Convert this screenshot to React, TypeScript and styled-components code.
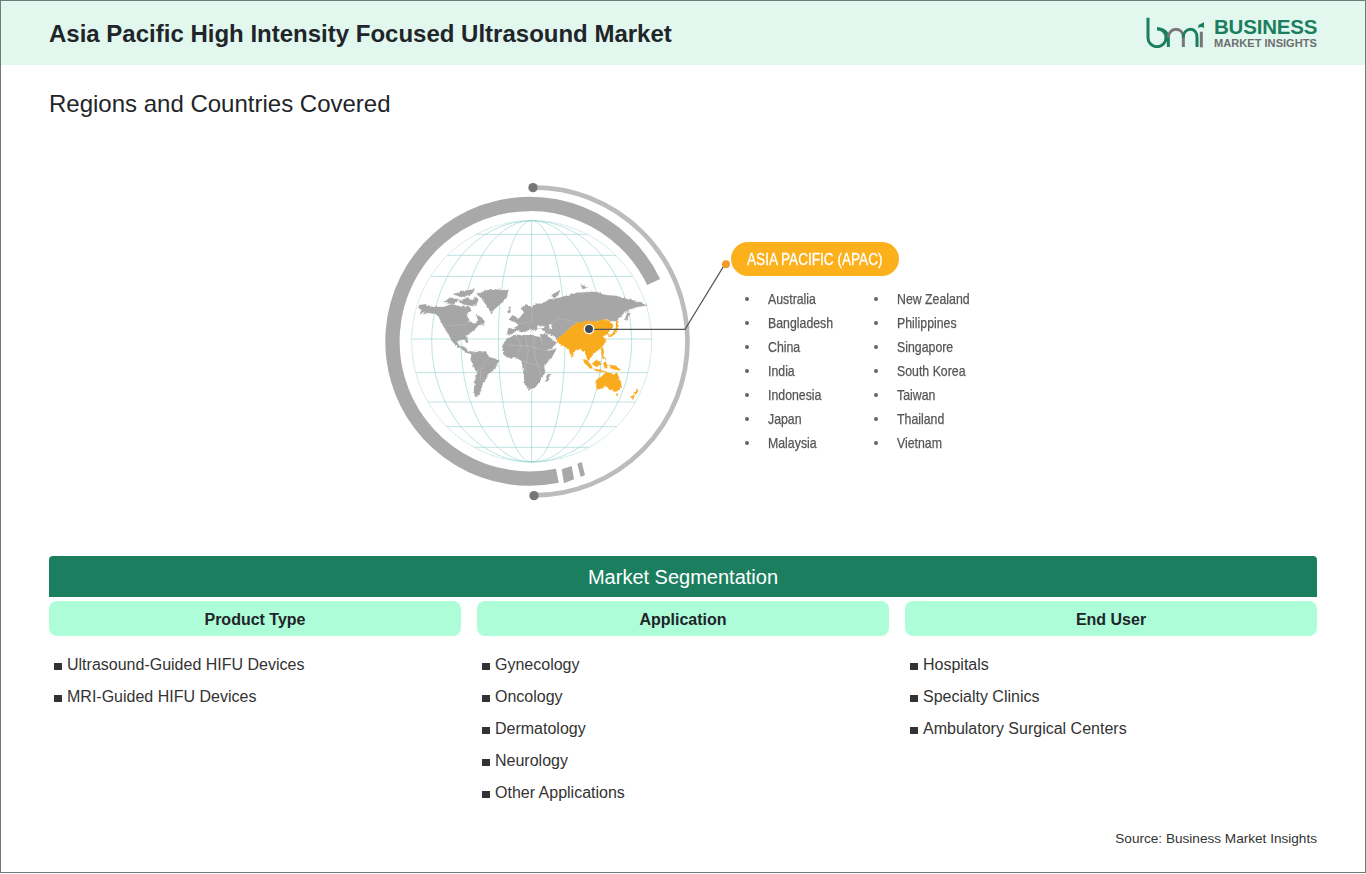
import React from "react";
import styled, { createGlobalStyle } from "styled-components";

const Global = createGlobalStyle`
  html, body { margin: 0; padding: 0; background: #fff; }
  body { font-family: "Liberation Sans", Arial, sans-serif; color: #212529; }
`;
const Frame = styled.div`
  box-sizing: border-box; width: 1366px; height: 873px; border: 1px solid #6e7b7b; border-bottom-color: #777;
  display: flex; flex-direction: column; overflow: hidden;
`;
const Header = styled.header`
  height: 64px; flex: none; background: #e2f8ef; display: flex; align-items: center; justify-content: space-between;
  padding: 0 48px;
`;
const Title = styled.h1`
  margin: 0; font-size: 24px; line-height: 29px; font-weight: 700; color: #212529;
`;
const Logo = styled.div`
  display: flex; align-items: center; gap: 9px; margin-top: -1px;
`;
const LogoWords = styled.div`
  display: flex; flex-direction: column; font-weight: 700; width: 103px;
`;
const LogoTop = styled.span`
  font-size: 20.5px; line-height: 20px; color: #1b7f5f; letter-spacing: -0.2px; white-space: nowrap;
`;
const LogoBottom = styled.span`
  font-size: 11.1px; line-height: 12px; color: #6f6f6f; white-space: nowrap;
`;
const Section = styled.section`
  padding: 0 48px; flex: none;
`;
const Heading = styled.h2`
  margin: 24px 0 0; font-size: 24px; line-height: 29px; font-weight: 400; color: #212529;
`;
const Figure = styled.div`
  display: flex; height: 440px; padding-left: 321px; margin-top: -2px; padding-top: 55px; box-sizing: border-box;
`;
const Globe = styled.svg`
  width: 365px; height: 340px; flex: none;
`;
const Legend = styled.div`
  margin: 71px 0 0 -4px; display: flex; flex-direction: column; align-items: flex-start;
`;
const Pill = styled.div`
  width: 168px; height: 34px; border-radius: 17px; background: #fbb01c; color: #fff; box-sizing: border-box; padding-left: 16px;
  font-size: 17px; line-height: 35px; white-space: nowrap; -webkit-text-stroke: 0.3px #fff;
`;
const Squeezed = styled.span<{ $x: number }>`
  display: inline-block; transform: scaleX(${(p) => p.$x}); transform-origin: left center;
`;
const Columns = styled.div`
  display: grid; grid-template-columns: 129px 129px; margin: 11px 0 0 14px;
`;
const Country = styled.div`
  height: 24px; display: flex; align-items: center; color: #555;
  font-size: 14.5px; font-weight: 400; white-space: nowrap;
  -webkit-text-stroke: 0.25px #555;
`;
const Dot = styled.span`
  width: 4px; height: 4px; border-radius: 50%; background: #666; margin-right: 19px; flex: none;
`;
const Banner = styled.div`
  height: 41px; background: #1b7f5f; color: #fff; border-radius: 4px 4px 0 0; text-align: center;
  font-size: 20px; line-height: 43px;
`;
const Segments = styled.div`
  display: grid; grid-template-columns: repeat(3, 412px); column-gap: 16px; margin-top: 4px;
`;
const SegmentHead = styled.div`
  height: 35px; border-radius: 8px; background: #adfdd9; text-align: center; font-size: 16px; font-weight: 700; line-height: 37px;
  color: #212529;
`;
const Items = styled.ul`
  list-style: none; margin: 13px 0 0; padding: 0 0 0 5px;
`;
const Item = styled.li`
  height: 32px; font-size: 16px; line-height: 32px; color: #333; white-space: nowrap;
  &::before {
    content: ""; display: inline-block; width: 8px; height: 7px; background: #333; margin-right: 5px; vertical-align: 0;
  }
`;
const SegmentBlock = styled.div``;
const Source = styled.div`
  position: absolute; right: 49px; top: 830px; font-size: 13.6px; line-height: 17px; color: #333;
`;

const left = ["Australia", "Bangladesh", "China", "India", "Indonesia", "Japan", "Malaysia"];
const right = ["New Zealand", "Philippines", "Singapore", "South Korea", "Taiwan", "Thailand", "Vietnam"];
const segs = [
  { t: "Product Type", i: ["Ultrasound-Guided HIFU Devices", "MRI-Guided HIFU Devices"] },
  { t: "Application", i: ["Gynecology", "Oncology", "Dermatology", "Neurology", "Other Applications"] },
  { t: "End User", i: ["Hospitals", "Specialty Clinics", "Ambulatory Surgical Centers"] },
];

// Coordinates below are in a map-local space; the group is translated by (90, 300).
const grayLand = [
  "55,103 75,100 100,108 130,108 155,100 185,108 205,105 215,118 200,130 205,150 222,158 235,148 228,130 245,140 255,150 250,160 235,163 225,175 208,188 198,195 205,212 200,215 190,205 175,208 170,212 180,225 195,228 205,240 225,243 215,250 200,245 180,230 160,215 145,190 130,165 115,135 100,128 85,125 70,130 75,120 60,130 65,115 55,110",
  "230,68 270,55 325,58 320,80 300,100 280,118 275,130 265,110 250,90 240,78",
  "130,95 150,80 175,85 165,100",
  "160,70 190,60 225,55 215,70 185,78",
  "175,90 200,82 225,90 218,105 190,100",
  "225,75 235,85 228,105 215,95",
  "325,108 332,108 330,114",
  "215,250 235,240 255,243 270,258 295,268 285,295 270,305 255,325 245,345 240,365 238,372 225,375 222,360 225,330 232,305 220,285 212,265",
  "307,225 320,205 345,192 375,188 400,195 420,198 430,225 445,240 470,232 455,260 432,285 435,305 420,330 405,350 385,355 375,340 370,300 365,270 345,258 325,262 310,250",
  "420,190 440,190 460,210 470,215 455,232 438,240 428,220",
  "320,190 325,175 345,170 355,160 340,150 345,135 355,145 372,125 362,112 378,100 395,108 405,98 425,98 450,85 480,80 505,72 535,65 585,62 615,72 650,75 680,84 710,90 742,102 712,108 688,115 668,130 650,150 640,150 620,145 595,150 560,152 530,155 510,170 490,190 470,205 455,190 440,188 420,170 405,180 390,175 370,185 350,178 335,190",
  "328,145 338,132 346,140 338,152",
  "322,118 330,114 332,124 324,126",
  "455,72 480,58 475,72 462,82",
  "542,40 560,50 550,54",
  "682,125 692,124 680,148 675,145",
  "436,328 444,306 450,310 442,332",
];
const orangeLand = [
  "470,205 490,190 510,170 530,155 560,150 590,152 610,145 630,150 640,165 630,175 625,188 610,195 618,205 610,225 600,235 590,240 580,250 570,262 565,272 555,245 540,235 525,238 515,260 508,240 495,225 478,218",
  "648,150 656,150 654,172 648,186 632,198 624,196 640,182 648,170",
  "548,264 554,262 570,278 578,292 570,292 556,278",
  "576,278 590,266 600,272 600,282 586,286",
  "580,294 600,296 620,302 608,302 588,300",
  "606,230 612,234 610,252 616,266 608,262 604,246",
  "610,278 618,272 622,292 614,290",
  "626,282 646,284 666,300 648,296 632,292",
  "588,328 606,316 618,304 632,306 642,312 648,302 658,320 664,342 658,358 644,362 632,354 618,346 606,352 590,356",
  "648,368 654,368 652,376",
  "692,380 700,372 704,374 698,384",
  "704,364 712,354 714,360 708,370",
];
const borders = [
  "M345 192 L365 225 L350 258", "M375 188 L385 240 L375 300", "M400 195 L405 260 L425 320",
  "M320 222 L385 225 L445 240", "M365 270 L420 285",
  "M130 165 L205 160", "M255 290 L225 300 M270 258 L245 285 L240 330",
  "M355 160 L400 150 M395 108 L398 150", "M440 188 L470 140 L530 155",
];

const lats = [190, 253, 316, 504, 605, 693, 767, 829];
const rxs = [300, 212, 100];
const GridC = "#93d2cc";

const LogoMark = () => (
  <svg width="59" height="31" viewBox="48 50 177 93">
    <g fill="none" strokeLinecap="butt">
      <path d="M54 52 V112 A27 27 0 1 0 81 85" stroke="#1b7f5f" strokeWidth="9" />
      <path d="M81 85 C100 85 115 96 115 116 V140" stroke="#1b7f5f" strokeWidth="9" />
      <path d="M115 112 C115 96 126 87 138 87 C151 87 160 97 160 112 V140" stroke="#777" strokeWidth="9" />
      <path d="M160 112 C160 96 170 87 182 87 C194 87 201 97 201 112 V140" stroke="#1b7f5f" strokeWidth="9" />
      <path d="M214 94 V141" stroke="#777" strokeWidth="9" />
    </g>
    <path d="M205 74 L222 66 V84 Q214 76 205 84 Z" fill="#1b7f5f" />
  </svg>
);

export default function App() {
  return (
    <>
      <Global />
      <Frame>
        <Header>
          <Title>Asia Pacific High Intensity Focused Ultrasound Market</Title>
          <Logo>
            <LogoMark />
            <LogoWords>
              <LogoTop>BUSINESS</LogoTop>
              <LogoBottom>MARKET INSIGHTS</LogoBottom>
            </LogoWords>
          </Logo>
        </Header>
        <Section>
          <Heading>Regions and Countries Covered</Heading>
          <Figure>
            <Globe viewBox="0 0 1095 1020">
              <defs>
                <clipPath id="gc"><ellipse cx="485" cy="511" rx="360" ry="362" /></clipPath>
                <filter id="coast" filterUnits="userSpaceOnUse" x="0" y="0" width="800" height="400" colorInterpolationFilters="sRGB">
                  <feTurbulence type="fractalNoise" baseFrequency="0.1" numOctaves="2" seed="4" result="n" />
                  <feDisplacementMap in="SourceGraphic" in2="n" scale="9" xChannelSelector="R" yChannelSelector="G" />
                </filter>
              </defs>
              <path d="M489 49 A462 462 0 0 1 492 973" fill="none" stroke="#bcbcbc" strokeWidth="14" />
              <circle cx="489" cy="50" r="14" fill="#777" />
              <circle cx="492" cy="974" r="14" fill="#777" />
              <path d="M851 333 A412 412 0 1 0 562 914.5" fill="none" stroke="#a9a9a9" strokeWidth="43" />
              <polygon points="575,895 605,885 612,925 582,937" fill="#a9a9a9" />
              <polygon points="622,878 635,873 645,912 632,918" fill="#a9a9a9" />
              <g fill="none" stroke={GridC} strokeWidth="1.8">
                <ellipse cx="485" cy="511" rx="360" ry="362" strokeDasharray="5 2" />
                {rxs.map((r) => <ellipse key={r} cx="485" cy="511" rx={r} ry="362" />)}
                <path d="M485 149 V873" />
                <g clipPath="url(#gc)">
                  {lats.map((y) => <path key={y} d={`M120 ${y} H850`} />)}
                </g>
              </g>
              <g transform="translate(90 300)">
                <g filter="url(#coast)">
                  <g fill="#a6a6a6" stroke="#a6a6a6" strokeWidth="1" strokeLinejoin="round">
                    {grayLand.map((p, i) => <polygon key={i} points={p} />)}
                  </g>
                  <g fill="#fff">
                    <polygon points="346,188 380,182 410,186 395,192 360,192" />
                    <polygon points="410,162 435,166 430,172 413,172" />
                    <polygon points="448,160 456,158 456,175 448,175" />
                  </g>
                </g>
                <g fill="none" stroke="#c6c6c6" strokeWidth="1.2">
                  {borders.map((d) => <path key={d} d={d} />)}
                </g>
                <g filter="url(#coast)" fill="#f9ab1e" stroke="#f9ab1e" strokeWidth="1" strokeLinejoin="round">
                  {orangeLand.map((p, i) => <polygon key={i} points={p} />)}
                </g>
              </g>
              <path d="M672 475 H945 L1062 284" fill="none" stroke="#555" strokeWidth="3.5" />
              <circle cx="657" cy="474" r="14" fill="#3d4a55" stroke="#fff" strokeWidth="4" />
              <circle cx="1068" cy="280" r="12" fill="#f29a2e" />
            </Globe>
            <Legend>
              <Pill><Squeezed $x={0.8}>ASIA PACIFIC (APAC)</Squeezed></Pill>
              <Columns>
                <div>{left.map((c) => <Country key={c}><Dot /><Squeezed $x={0.85}>{c}</Squeezed></Country>)}</div>
                <div>{right.map((c) => <Country key={c}><Dot /><Squeezed $x={0.85}>{c}</Squeezed></Country>)}</div>
              </Columns>
            </Legend>
          </Figure>
          <Banner>Market Segmentation</Banner>
          <Segments>
            {segs.map((s) => (
              <SegmentBlock key={s.t}>
                <SegmentHead>{s.t}</SegmentHead>
                <Items>{s.i.map((x) => <Item key={x}>{x}</Item>)}</Items>
              </SegmentBlock>
            ))}
          </Segments>
        </Section>
        <Source>Source: Business Market Insights</Source>
      </Frame>
    </>
  );
}
